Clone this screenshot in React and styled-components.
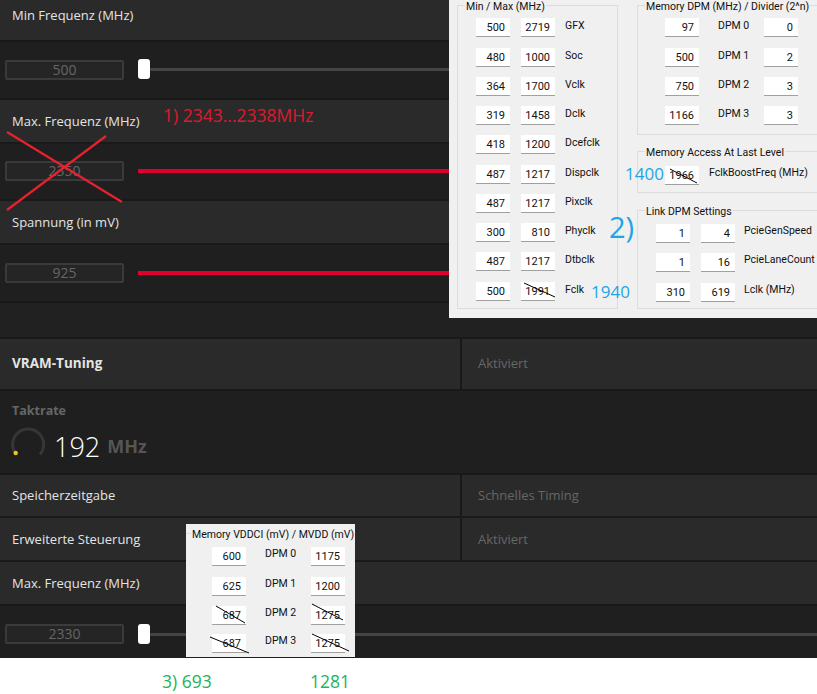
import React from "react";
import styled, { createGlobalStyle } from "styled-components";

const Global = createGlobalStyle`
  html, body { margin: 0; padding: 0; background: #fff; }
  * { box-sizing: border-box; }
`;

const Page = styled.div`
  position: relative;
  width: 817px;
  height: 694px;
  overflow: hidden;
  background: #fff;
  font-family: "Open Sans", "Liberation Sans", sans-serif;
`;

const Settings = styled.div`
  display: flex;
  flex-direction: column;
  gap: 2px;
  height: 658px;
  background: #191919;
`;

const Row = styled.div`
  display: flex;
  height: ${(p) => p.$h || 42}px;
  gap: 2px;
`;

const Cell = styled.div`
  display: flex;
  flex: ${(p) => (p.$half ? "0 0 460px" : "1")};
  align-items: center;
  padding: 0 12px ${(p) => p.$lift || 0}px;
  color: #e4e4e4;
  font-size: ${(p) => (p.$bold ? 13.5 : 13)}px;
  font-weight: ${(p) => (p.$bold ? 700 : 400)};
  background: #2a2a2a;
`;

const ValueCell = styled(Cell)`
  padding-left: 16px;
  color: #666;
`;

const SliderRow = styled.div`
  display: flex;
  align-items: center;
  gap: 14px;
  height: ${(p) => p.$h || 56}px;
  padding: ${(p) => p.$pad || 0}px 0 0 5px;
  background: #1f1f1f;
`;

const ValueBox = styled.div`
  width: 119px;
  height: 20px;
  border: 2px solid #3a3a3a;
  border-radius: 2px;
  background: #252525;
  color: #666;
  font-size: 14px;
  line-height: 16px;
  text-align: center;
`;

const Track = styled.div`
  position: relative;
  flex: 1;
  height: ${(p) => (p.$red ? 4 : 3)}px;
  background: ${(p) => (p.$red ? "#e0002d" : "#444")};
`;

const Thumb = styled.div`
  position: absolute;
  left: 0;
  top: -9px;
  width: 12px;
  height: 20px;
  border-radius: 3px;
  background: #fff;
`;

const Spacer = styled.div`
  height: 34px;
  background: #212121;
`;

const ClockRow = styled.div`
  display: flex;
  flex-direction: column;
  height: 82px;
  padding: 12px 12px 0;
  background: #1f1f1f;
`;

const ClockLabel = styled.div`
  color: #666;
  font-size: 12.5px;
  font-weight: 700;
  line-height: 16px;
`;

const ClockValue = styled.div`
  display: flex;
  align-items: center;
  height: 40px;
  margin: 6px 0 0 -2px;
`;

const Gauge = styled.svg`
  width: 36px;
  height: 36px;
  flex: none;
`;

const Speed = styled.span`
  margin-left: 8px;
  padding-top: 3px;
  color: #fff;
  font-size: 27px;
  font-weight: 300;
`;

const Unit = styled.span`
  margin-left: 7px;
  padding-top: 3px;
  color: #555;
  font-size: 18px;
  font-weight: 700;
`;

/* pasted tool windows */
const ToolPanel = styled.div`
  position: absolute;
  left: ${(p) => p.$x}px;
  top: ${(p) => p.$y}px;
  width: ${(p) => p.$w}px;
  height: ${(p) => p.$h}px;
  overflow: hidden;
  background: #f0f0f0;
  color: #111;
  font-family: Roboto, "Liberation Sans", Arial, sans-serif;
  font-size: 10.5px;
`;

const ToolGrid = styled.div`
  display: grid;
  grid-template-columns: 161px 200px;
  column-gap: 19px;
  padding: 5px 0 0 8px;
`;

const SideStack = styled.div`
  display: flex;
  flex-direction: column;
`;

const Group = styled.fieldset`
  position: relative;
  margin: ${(p) => p.$margin || "0"};
  height: ${(p) => p.$h}px;
  padding: ${(p) => p.$pad || "0"};
  border: 1px solid #dcdcdc;
`;

const Legend = styled.legend`
  position: absolute;
  top: -6px;
  left: ${(p) => p.$x || 7}px;
  padding: 0 1px;
  background: #f0f0f0;
  line-height: 13px;
  white-space: nowrap;
`;

const FieldLabel = styled.div`
  line-height: 14px;
  white-space: nowrap;
`;

const FieldRows = styled.div`
  display: grid;
  grid-template-columns: ${(p) => p.$cols};
  grid-template-rows: ${(p) => p.$rows};
  align-items: start;

  ${FieldLabel} {
    margin-top: ${(p) => p.$labelTop || 0}px;
  }
`;

const Field = styled.div`
  position: relative;
  width: 34px;
  height: 19px;
  padding-right: 5px;
  background: #fff;
  border-bottom: 1px solid #a0a0a0;
  font-size: 11px;
  text-align: right;
  line-height: 19px;
  color: #111;
`;

const StrikeSvg = styled.svg`
  position: absolute;
  left: 0;
  top: 0;
  width: 34px;
  height: 19px;
  overflow: visible;
`;

const Overlay = styled.svg`
  position: absolute;
  left: 0;
  top: 0;
  width: 817px;
  height: 694px;
  pointer-events: none;
`;

const Note = styled.div`
  position: absolute;
  left: ${(p) => p.$x}px;
  top: ${(p) => p.$y}px;
  color: ${(p) => p.$color};
  font-size: ${(p) => p.$size || 17.5}px;
  line-height: 1;
  white-space: nowrap;
`;

const F = ({ v, strike }) => (
  <Field>
    {v}
    {strike && (
      <StrikeSvg>
        <line x1={strike[0]} y1={strike[1]} x2={strike[2]} y2={strike[3]} stroke="#000" strokeWidth="1" />
      </StrikeSvg>
    )}
  </Field>
);

const clocks = [
  ["500", "2719", "GFX"],
  ["480", "1000", "Soc"],
  ["364", "1700", "Vclk"],
  ["319", "1458", "Dclk"],
  ["418", "1200", "Dcefclk"],
  ["487", "1217", "Dispclk"],
  ["487", "1217", "Pixclk"],
  ["300", "810", "Phyclk"],
  ["487", "1217", "Dtbclk"],
];

const memDpm = [
  ["97", "DPM 0", "0"],
  ["500", "DPM 1", "2"],
  ["750", "DPM 2", "3"],
  ["1166", "DPM 3", "3"],
];

const Slider = ({ value, red, h, pad }) => (
  <SliderRow $h={h} $pad={pad}>
    <ValueBox>{value}</ValueBox>
    <Track $red={red}>{!red && <Thumb />}</Track>
  </SliderRow>
);

export default function App() {
  return (
    <Page>
      <Global />
      <Settings>
        <Row $h={40}><Cell $lift={10}>Min Frequenz (MHz)</Cell></Row>
        <Slider value="500" />
        <Row><Cell>Max. Frequenz (MHz)</Cell></Row>
        <Slider value="2350" red />
        <Row><Cell>Spannung (in mV)</Cell></Row>
        <Slider value="925" red />
        <Spacer />
        <Row $h={50}>
          <Cell $half $bold $lift={2}>VRAM-Tuning</Cell>
          <ValueCell $lift={2}>Aktiviert</ValueCell>
        </Row>
        <ClockRow>
          <ClockLabel>Taktrate</ClockLabel>
          <ClockValue>
            <Gauge viewBox="0 0 36 36">
              <path d="M5.5 26.5 A 15.5 15.5 0 1 1 30 27.5" fill="none" stroke="#363636" strokeWidth="3" />
              <circle cx="5.7" cy="26" r="2.2" fill="#f5c518" />
            </Gauge>
            <Speed>192</Speed>
            <Unit>MHz</Unit>
          </ClockValue>
        </ClockRow>
        <Row>
          <Cell $half>Speicherzeitgabe</Cell>
          <ValueCell>Schnelles Timing</ValueCell>
        </Row>
        <Row>
          <Cell $half>Erweiterte Steuerung</Cell>
          <ValueCell>Aktiviert</ValueCell>
        </Row>
        <Row><Cell>Max. Frequenz (MHz)</Cell></Row>
        <Slider value="2330" h={52} pad={4} />
      </Settings>

      <ToolPanel $x={449} $y={0} $w={368} $h={318}>
        <ToolGrid>
          <Group $h={304} $pad="12px 0 0 18px">
            <Legend>Min / Max (MHz)</Legend>
            <FieldRows $labelTop={1} $cols="45px 44px auto" $rows="30px 29px 29px 29px 30px 29px 29px 29px 30px 19px">
              {clocks.map(([a, b, l]) => (
                <React.Fragment key={l}>
                  <F v={a} />
                  <F v={b} />
                  <FieldLabel>{l}</FieldLabel>
                </React.Fragment>
              ))}
              <F v="500" />
              <F v="1991" strike={[3, 1, 34, 15]} />
              <FieldLabel>Fclk</FieldLabel>
            </FieldRows>
          </Group>
          <SideStack>
            <Group $h={130} $pad="12px 0 0 27px">
              <Legend>Memory DPM (MHz) / Divider (2^n)</Legend>
              <FieldRows $labelTop={1} $cols="53px 46px 34px" $rows="30px 29px 29px 19px">
                {memDpm.map(([a, l, b]) => (
                  <React.Fragment key={l}>
                    <F v={a} />
                    <FieldLabel>{l}</FieldLabel>
                    <F v={b} />
                  </React.Fragment>
                ))}
              </FieldRows>
            </Group>
            <Group $h={42} $margin="16px 0 0" $pad="14px 0 0 27px">
              <Legend>Memory Access At Last Level</Legend>
              <FieldRows $cols="44px auto" $rows="19px">
                <F v="1966" strike={[5, 3, 32, 17]} />
                <FieldLabel>FclkBoostFreq (MHz)</FieldLabel>
              </FieldRows>
            </Group>
            <Group $h={99} $margin="17px 0 0" $pad="13px 0 0 18px">
              <Legend>Link DPM Settings</Legend>
              <FieldRows $cols="45px 43px auto" $rows="29px 30px 19px">
                <F v="1" /><F v="4" /><FieldLabel>PcieGenSpeed</FieldLabel>
                <F v="1" /><F v="16" /><FieldLabel>PcieLaneCount</FieldLabel>
                <F v="310" /><F v="619" /><FieldLabel>Lclk (MHz)</FieldLabel>
              </FieldRows>
            </Group>
          </SideStack>
        </ToolGrid>
      </ToolPanel>

      <ToolPanel $x={186} $y={524} $w={169} $h={133}>
        <Group $h={160} $margin="9px -10px 0" $pad="13px 0 0 35px">
          <Legend $x={14}>Memory VDDCI (mV) / MVDD (mV)</Legend>
          <FieldRows $cols="53px 46px 34px" $rows="30px 29px 28px 19px">
            <F v="600" /><FieldLabel>DPM 0</FieldLabel><F v="1175" />
            <F v="625" /><FieldLabel>DPM 1</FieldLabel><F v="1200" />
            <F v="687" strike={[4, 0, 33, 17]} /><FieldLabel>DPM 2</FieldLabel><F v="1275" strike={[1, -2, 32, 14]} />
            <F v="687" strike={[-2, 3, 37, 19]} /><FieldLabel>DPM 3</FieldLabel><F v="1275" strike={[1, 0, 38, 17]} />
          </FieldRows>
        </Group>
      </ToolPanel>

      <Overlay viewBox="0 0 817 694">
        <line x1="7" y1="132" x2="122" y2="202" stroke="#e8202f" strokeWidth="2.2" />
        <line x1="7" y1="210" x2="106" y2="136" stroke="#e8202f" strokeWidth="2.2" />
      </Overlay>

      <Note $x={163} $y={107} $color="#dc1a2e">1) 2343...2338MHz</Note>
      <Note $x={625} $y={165} $color="#1ea5e6" $size={17}>1400</Note>
      <Note $x={609} $y={212} $color="#1ea5e6" $size={29}>2)</Note>
      <Note $x={591} $y={283} $color="#1ea5e6" $size={17}>1940</Note>
      <Note $x={162} $y={673} $color="#22b45a">3) 693</Note>
      <Note $x={310} $y={673} $color="#22b45a">1281</Note>
    </Page>
  );
}
